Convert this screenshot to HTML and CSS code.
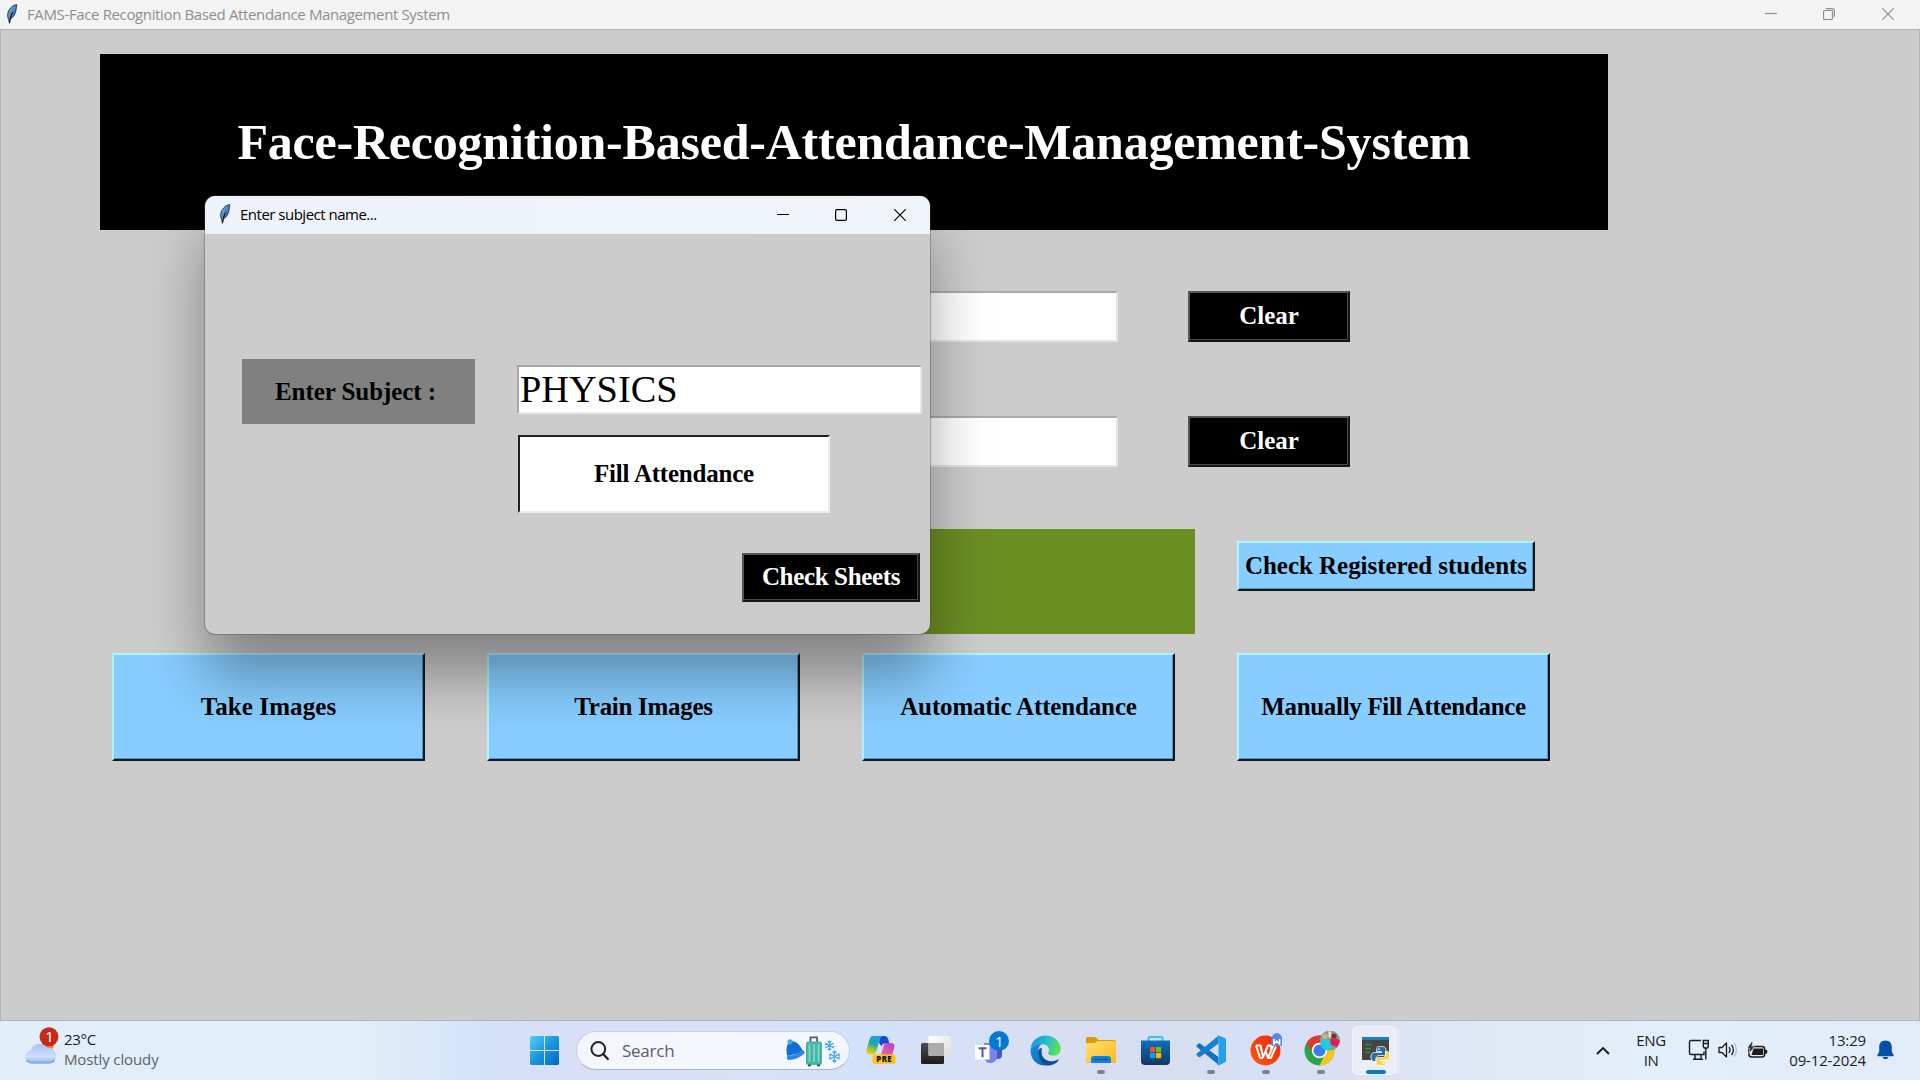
FILE: index.html
```
<!DOCTYPE html>
<html lang="en">
<head>
<meta charset="utf-8">
<title>FAMS-Face Recognition Based Attendance Management System</title>
<link rel="stylesheet" href="styles.css">
</head>
<body>
<svg width="0" height="0" class="defs" aria-hidden="true">
  <defs>
    <linearGradient id="gFeather" x1="0" y1="0" x2="1" y2="1"><stop offset="0" stop-color="#8fb9ea"/><stop offset=".6" stop-color="#3b74bd"/><stop offset="1" stop-color="#1c3555"/></linearGradient>
    <symbol id="feather" viewBox="0 0 12 20">
      <path d="M10.800.6C7.500.8 3 4.300 2 8.600 1.400 11.400 1.500 13.800 2.600 15.300l.8 3.800.7-3.900C6.600 14 9.300 10.500 9.900 6.800 10.300 4.500 10.600 2.600 10.800.6z" fill="url(#gFeather)" stroke="#30343a" stroke-width=".9"/>
      <path d="M6.500 8.300C5 11.500 4 14 3.500 19.300" fill="none" stroke="#15181c" stroke-width="1.100"/>
    </symbol>
  </defs>
</svg>
<div class="desktop">
  <header class="titlebar">
    <svg class="feather" width="12" height="20"><use href="#feather"/></svg>
    <span class="titlebar-text">FAMS-Face Recognition Based Attendance Management System</span>
    <div class="controls">
      <svg width="12" height="12" viewBox="0 0 12 12"><path d="M0 5.500h12"/></svg>
      <svg width="12" height="12" viewBox="0 0 12 12"><rect x=".5" y="2.500" width="9" height="9" rx="1.300"/><path d="M2.800.6h6a2.600 2.600 0 0 1 2.600 2.600v5.600"/></svg>
      <svg width="12" height="12" viewBox="0 0 12 12"><path d="M.3.3l11.400 11.400M11.700.3L.3 11.700"/></svg>
    </div>
  </header>

  <main class="app">
    <h1 class="banner">Face-Recognition-Based-Attendance-Management-System</h1>
    <div class="form-row">
      <div class="entry"></div>
      <button class="btn btn-dark clear">Clear</button>
    </div>
    <div class="form-row form-row-second">
      <div class="entry"></div>
      <button class="btn btn-dark clear">Clear</button>
    </div>
    <div class="status-row">
      <div class="notification"></div>
      <button class="btn btn-sky registered">Check Registered students</button>
    </div>
    <div class="actions">
      <button class="btn btn-sky take">Take Images</button>
      <button class="btn btn-sky train">Train Images</button>
      <button class="btn btn-sky automatic">Automatic Attendance</button>
      <button class="btn btn-sky manual">Manually Fill Attendance</button>
    </div>
  </main>

  <section class="dialog">
    <div class="dialog-bar">
      <svg class="feather" width="12" height="20"><use href="#feather"/></svg>
      <span class="dialog-title">Enter subject name...</span>
      <div class="controls">
        <svg width="12" height="12" viewBox="0 0 12 12"><path d="M0 5.500h12"/></svg>
        <svg width="12" height="12" viewBox="0 0 12 12"><rect x=".6" y=".6" width="10.800" height="10.800" rx="1.500"/></svg>
        <svg width="12" height="12" viewBox="0 0 12 12"><path d="M.3.3l11.400 11.400M11.700.3L.3 11.700"/></svg>
      </div>
    </div>
    <div class="dialog-body">
      <div class="subject-label">Enter Subject :</div>
      <div class="subject-fields">
        <div class="subject-entry">PHYSICS</div>
        <button class="fill">Fill Attendance</button>
      </div>
      <button class="btn btn-dark sheets">Check Sheets</button>
    </div>
  </section>

  <footer class="taskbar">
    <div class="weather">
      <svg width="36" height="40" viewBox="0 0 36 40">
        <defs><linearGradient id="gCloud" x1="0" y1="0" x2="0" y2="1"><stop offset="0" stop-color="#a9c2f4"/><stop offset=".65" stop-color="#cfe0fb"/><stop offset="1" stop-color="#8fb0ee"/></linearGradient></defs>
        <circle cx="24" cy="18" r="6" fill="#f5821f"/>
        <path d="M7.500 36.500a6.700 6.700 0 0 1-.6-13.300A9.300 9.300 0 0 1 23 20.500a7.900 7.900 0 0 1 2.300 16z" fill="url(#gCloud)"/>
        <path d="M2.500 33c1.500 2.300 3.500 2.600 5 2.600h18c2 0 4-1 5-3" fill="none" stroke="#86a8ec" stroke-width="1.800"/>
        <circle cx="25" cy="9.700" r="9.500" fill="#c42b1c"/>
        <text x="25.500" y="15" text-anchor="middle" class="badge-text">1</text>
      </svg>
      <div class="weather-text"><span class="temp">23°C</span><span class="cond">Mostly cloudy</span></div>
    </div>

    <div class="center">
      <svg class="start" width="29" height="29" viewBox="0 0 29 29">
        <defs><linearGradient id="gWin" gradientUnits="userSpaceOnUse" x1="0" y1="0" x2="29" y2="29"><stop offset="0" stop-color="#4fd0fb"/><stop offset=".5" stop-color="#1c95e0"/><stop offset="1" stop-color="#0067c8"/></linearGradient></defs>
        <path fill="url(#gWin)" d="M1.500 0H14v14H0V1.500Q0 0 1.500 0zM15 0h12.500Q29 0 29 1.500V14H15zM0 15h14v14H1.500Q0 29 0 27.500zM15 15h14v12.500q0 1.500-1.500 1.500H15z"/>
      </svg>
      <div class="search">
        <svg width="20" height="20" viewBox="0 0 20 20"><circle cx="8.300" cy="8" r="6.900" fill="none" stroke="#1f1f1f" stroke-width="2"/><path d="M13.200 13l4.600 5" stroke="#1f1f1f" stroke-width="2.300" stroke-linecap="round"/></svg>
        <span class="search-text">Search</span>
        <svg width="58" height="32" viewBox="0 0 58 32">
          <path d="M2.300 21C.5 14 1.500 8.500 6 6.500c5-1 9 3.500 12.300 10.500z" fill="#0f6fd4"/>
          <circle cx="5" cy="6.800" r="2.600" fill="#4ba3f2"/>
          <path d="M4 22.800Q11 22.500 17.300 17.500" fill="none" stroke="#2d86e2" stroke-width="4.400" stroke-linecap="round"/>
          <path d="M25.500 7V2.300h6.500V7" fill="none" stroke="#5d5a66" stroke-width="1.800"/>
          <rect x="21" y="6.500" width="16" height="23.500" rx="2.500" fill="#47b3a6"/>
          <path d="M24.500 9v18M29 9v18M33.500 9v18" stroke="#83d9cc" stroke-width="1.700"/>
          <path d="M23 30.500h3M32 30.500h3" stroke="#30404a" stroke-width="1.500"/>
          <g stroke="#4aa7e6" stroke-width="1.300" fill="none">
            <path d="M44.500 5.500v10M40.200 8l8.600 5M40.200 13l8.600-5M42.800 6.300l1.700 1.400 1.700-1.400M42.800 14.700l1.700-1.400 1.700 1.400M40 10.300l1.700-.9M47.500 12l1.800-.6"/>
            <path d="M49.500 15.500v12M44.300 18.500l10.400 6M44.300 24.500l10.400-6M47.600 16.500l1.900 1.700 1.900-1.700M47.600 26.500l1.900-1.700 1.900 1.700M44 21l2-1M53 23l2-1M44 22.300l2 .8M53 20l2 .8"/>
          </g>
        </svg>
      </div>

      <div class="app-icon">
        <svg width="30" height="30" viewBox="0 0 30 30">
          <defs>
            <linearGradient id="gCo1" x1=".6" y1="0" x2=".3" y2="1"><stop offset="0" stop-color="#12a6ee"/><stop offset=".45" stop-color="#27a3a0"/><stop offset=".7" stop-color="#8cc63f"/><stop offset="1" stop-color="#f6c915"/></linearGradient>
            <linearGradient id="gCo2" x1="1" y1="0" x2="0" y2="1"><stop offset="0" stop-color="#a13fe8"/><stop offset=".5" stop-color="#d957b0"/><stop offset="1" stop-color="#ff7a66"/></linearGradient>
          </defs>
          <path d="M14 1h4.500c2 0 3 1.200 3.600 3l1.200 4.200h-4c-2 0-3 1-3.600 3L13 8z" fill="#1748cf"/>
          <path d="M7.500 1H17c-2 .4-2.900 2-3.500 4l-3 10.500C9.900 17.800 9 19.500 6.500 19.500H4c-3 0-4.300-2-3.500-4.800L3.600 4.300C4.200 2.200 5.300 1 7.500 1z" fill="url(#gCo1)"/>
          <path d="M19.500 8h5c3 0 4.500 1.700 3.700 4.700L26.500 19c-.6 2-1.700 3-3.800 3H12c2.200-.5 3-2 3.600-4l2-7c.4-1.700 1-3 1.900-3z" fill="url(#gCo2)"/>
          <rect x="6.500" y="19.500" width="23" height="9.500" rx="2.500" fill="#ffc414"/>
          <text x="18.200" y="27.200" text-anchor="middle" class="pre">PRE</text>
        </svg>
      </div>
      <div class="app-icon">
        <svg width="32" height="30" viewBox="0 0 32 30">
          <defs><linearGradient id="gTv" x1="0" y1="0" x2="0" y2="1"><stop offset="0" stop-color="#4c4c4c"/><stop offset="1" stop-color="#1c1c1c"/></linearGradient><linearGradient id="gTw" x1="0" y1="0" x2="1" y2="1"><stop offset="0" stop-color="#fff"/><stop offset="1" stop-color="#dcdcdc"/></linearGradient></defs>
          <rect x="1" y="8" width="23" height="21" rx="1.500" fill="url(#gTv)"/>
          <rect x="8.500" y="1" width="22.500" height="20" rx="1.500" fill="url(#gTw)"/>
          <path d="M8.500 8H24v13H10q-1.500 0-1.500-1.500z" fill="#acacac"/>
        </svg>
      </div>
      <div class="app-icon teams">
        <svg width="36" height="36" viewBox="0 0 36 36">
          <rect x="19" y="13" width="10" height="15" rx="4" fill="#4f54c4"/>
          <path d="M11 12h13v14a6 6 0 0 1-6 6c-4 0-6-2-6-5z" fill="#7b83eb"/>
          <rect x="2" y="14" width="14.500" height="14.500" fill="#fff"/>
          <path d="M5.500 17.200h8M9.500 17.200v9" stroke="#4b53bc" stroke-width="2"/>
          <circle cx="26" cy="10" r="10" fill="#0078d4"/>
          <text x="26.200" y="15.600" text-anchor="middle" class="badge-text">1</text>
        </svg>
      </div>
      <div class="app-icon">
        <svg width="31" height="31" viewBox="0 0 31 31">
          <defs>
            <linearGradient id="gE1" x1="0" y1=".2" x2="1" y2=".5"><stop offset="0" stop-color="#168fd8"/><stop offset=".5" stop-color="#27bdd0"/><stop offset="1" stop-color="#5fe04e"/></linearGradient>
            <linearGradient id="gE2" x1="0" y1="0" x2="1" y2="1"><stop offset="0" stop-color="#168fdc"/><stop offset="1" stop-color="#0e62b4"/></linearGradient>
          </defs>
          <path d="M.6 13.500C1.500 6 8 .5 15.600.5 24 .5 30.600 6.500 30.600 14c0 4-3 6.700-7.300 6.700-3.600 0-5.300-1.500-5.300-2.700 0-.9 1.100-1.200 1.100-3.300 0-2.800-2.800-5.400-7-5.400C6.500 9.300 2.500 11 .6 13.500z" fill="url(#gE1)"/>
          <path d="M.5 15.500C.5 11.500 6 9 11.500 9c-2.500 1.500-3.800 5-3.300 9 .7 6.500 5 11 10.500 12.200C8.500 32.500.5 25 .5 15.500z" fill="url(#gE2)"/>
          <path d="M12.200 13.500c-2.700 7 3 13.300 10 12.700 2.700-.2 4.800-1.100 5.900-1.700.6-.2 1 .2.600.8-2.500 3.500-6.300 5.400-10.500 5.200C11.500 29 8 23.500 8.100 17.500c0-3.500 2-5 4.100-4z" fill="#0d4f9d"/>
        </svg>
      </div>
      <div class="app-icon running">
        <svg width="32" height="30" viewBox="0 0 32 30">
          <defs><linearGradient id="gFo" x1="0" y1="0" x2="1" y2="1"><stop offset="0" stop-color="#ffe07a"/><stop offset="1" stop-color="#fbb916"/></linearGradient></defs>
          <path d="M1 3.500Q1 2 2.500 2H9q1.200 0 2 .8L13.500 5H29q2 0 2 2v5H1z" fill="#dd9a07"/>
          <path d="M1 8q5.500.3 9-.2L13 6h16q2 0 2 2v20H1z" fill="url(#gFo)"/>
          <path d="M6 28v-4q0-3 3-3h14q3 0 3 3v4z" fill="#1282d8"/>
          <path d="M9.500 24.500h13" stroke="#075aa2" stroke-width="1.500" stroke-linecap="round"/>
        </svg>
      </div>
      <div class="app-icon">
        <svg width="31" height="31" viewBox="0 0 31 31">
          <defs><linearGradient id="gSt" x1="0" y1="0" x2="0" y2="1"><stop offset="0" stop-color="#0c70bd"/><stop offset="1" stop-color="#163460"/></linearGradient></defs>
          <path d="M8.500 6V3.500Q8.500 2 10 2h11q1.500 0 1.500 1.500V6" fill="none" stroke="#2fc3f0" stroke-width="2"/>
          <path d="M1 5.500h29V26q0 4-4 4H5q-4 0-4-4z" fill="url(#gSt)"/>
          <path d="M10 12h5.200v5.200H10z" fill="#f25022"/><path d="M16 12h5.200v5.200H16z" fill="#7fba00"/><path d="M10 18h5.200v5.200H10z" fill="#00a4ef"/><path d="M16 18h5.200v5.200H16z" fill="#ffb900"/>
        </svg>
      </div>
      <div class="app-icon running">
        <svg width="32" height="31" viewBox="0 0 32 31">
          <path d="M1.500 10.500l2-2q.8-.6 1.600 0L23.500 22v7.800L1.600 11.800q-.5-.7-.1-1.300z" fill="#1173bd"/>
          <path d="M1.500 20l2 2q.8.600 1.600 0L23.500 8.500V.8L1.600 18.700q-.5.700-.1 1.300z" fill="#167fcb"/>
          <path d="M22 1q1-.9 2.400-.3L29.800 3q1.200.6 1.200 2v20.500q0 1.400-1.200 2L24.400 30q-1.400.6-2.400-.4l1.500-1V2.300z" fill="#27a0ec"/>
        </svg>
      </div>
      <div class="app-icon running">
        <svg width="34" height="34" viewBox="0 0 34 34">
          <defs><linearGradient id="gWps" x1="0" y1="1" x2="1" y2="0"><stop offset="0" stop-color="#ff5a0a"/><stop offset="1" stop-color="#ee2415"/></linearGradient></defs>
          <circle cx="16.500" cy="17.500" r="15" fill="url(#gWps)"/>
          <path d="M7 12.500h4.500l2.600 11.500L19 12.500h3.500l-.8 4M14 25l-3-.2L7 12.500M19 25l5.300-12.300M16.500 18l2.500 7h2.800L27 13.500" fill="none" stroke="#fff" stroke-width="2" stroke-linejoin="round"/>
          <path d="M23 3.500Q25 0 28 0t5 4.500V13H22.500V5z" fill="#5a86e8"/>
          <path d="M25 6v4.800l2.800-2.600 2.800 2.600V6" fill="none" stroke="#fff" stroke-width="1.600"/>
        </svg>
      </div>
      <div class="app-icon running">
        <svg width="38" height="38" viewBox="0 0 38 38">
          <circle cx="17.500" cy="19.500" r="15" fill="#2fa24c"/>
          <path d="M4.500 12A15 15 0 0 1 30.500 12L17.500 12.500a7 7 0 0 0-6.100 10.500z" fill="#de3a2d"/>
          <path d="M30.500 12A15 15 0 0 1 17.500 34.500l6-11.500A7 7 0 0 0 17.500 12.500z" fill="#fcc51b"/>
          <circle cx="17.500" cy="19.500" r="7.700" fill="#fff"/><circle cx="17.500" cy="19.500" r="6" fill="#3b7ded"/>
          <g transform="translate(0 -.5)">
            <circle cx="28" cy="10" r="10" fill="#8c9a85"/>
            <path d="M18.500 9l4.500-1 5 2 2.500 8.500q-3.500 2.500-8 0.500T18.500 12z" fill="#21ccd6"/>
            <path d="M28 8.500q4-2 9.500 1 .5 3-2.500 7l-6-2z" fill="#e31b62"/>
            <circle cx="23" cy="6" r="2.800" fill="#d9a58e"/><circle cx="32" cy="5.500" r="2.600" fill="#6e3835"/><path d="M26.500 1h2.500v6h-2.500z" fill="#e8e4cf"/>
          </g>
        </svg>
      </div>
      <div class="app-icon active">
        <svg width="30" height="30" viewBox="0 0 30 30">
          <path d="M1 1h27v23H1z" fill="#444"/><path d="M1 1h27v3H1z" fill="#1383cc"/>
          <path d="M4 8.500h7M4 12.500h6M4 16.500h5" stroke="#3e8b45" stroke-width="1.300"/>
          <g stroke="#fff" stroke-width=".8">
            <path d="M19.500 10.500c-4 0-4 1.500-4 3v2h5v1h-7c-2.500 0-3.500 2-3.500 4.500s1 4.500 3 4.500h2v-3c0-2 1.500-3 3.500-3h4c1.500 0 2.500-1 2.500-2.500v-3.500c0-2-1.500-3-5.500-3z" fill="#2e6da4"/>
            <path d="M21 29.500c4 0 4-1.500 4-3V25h-5v-1h5.500c2.500 0 3.500-1.500 3.500-4s-1-4.500-3-4.500h-1.500v3c0 2-1.500 3-3 3h-4c-1.500 0-2.500 1-2.500 2.500V27c0 1.500 2 2.500 6 2.500z" fill="#fbd24a"/>
          </g>
          <circle cx="17.800" cy="13.200" r=".9" fill="#fff"/><circle cx="22.500" cy="26.900" r=".9" fill="#fff"/>
        </svg>
      </div>
    </div>

    <div class="tray">
      <svg class="chev" width="14" height="9" viewBox="0 0 14 9"><path d="M1 8l6-6 6 6" fill="none" stroke="#1b1b1b" stroke-width="1.900"/></svg>
      <div class="lang"><span>ENG</span><span>IN</span></div>
      <svg class="net" width="22" height="22" viewBox="0 0 22 22"><g fill="none" stroke="#1b1b1b" stroke-width="1.400"><path d="M13 1.500H3Q1.500 1.500 1.500 3v11Q1.500 15.500 3 15.500h13v-3M7 15.500v4.500M13 15.500v4.500M5 20.300h10"/><path d="M15.300 1.500h5v6l-1 1.500h-3l-1-1.500zM15.300 4.500h5M17.800 9v11.500"/></g></svg>
      <svg class="vol" width="20" height="18" viewBox="0 0 20 18"><g fill="none" stroke="#1b1b1b" stroke-width="1.300" stroke-linejoin="round"><path d="M1 6.500h3L8.500 2v14L4 11.500H1z"/><path d="M11 6q2 3 0 6M13.500 3.800q3.800 5.200 0 10.400"/><path d="M16 1.800q5 7.200 0 14.400" stroke="#b6bec6"/></g></svg>
      <svg class="bat" width="21" height="17" viewBox="0 0 21 17"><rect x="2" y="4.500" width="15.500" height="10.500" rx="2.500" fill="none" stroke="#1b1b1b" stroke-width="1.600"/><path d="M4.500 13L6.500 6.500H16V13zM18 7.500q2.500 0 2.500 2.200T18 12z" fill="#1b1b1b"/><path d="M4.500 0L.3 6h2.800l-1 5.500L7.500 4.700H4.600L5.800 0z" fill="#1b1b1b" stroke="#e3edf8" stroke-width=".6"/></svg>
      <div class="clock"><span>13:29</span><span>09-12-2024</span></div>
      <svg class="bell" width="17" height="20" viewBox="0 0 17 20"><path d="M8.500.5c4 0 6.300 2.800 6.300 6.500v4.500l2 4q0 .7-.8.700H1q-.8 0-.8-.7l2-4V7C2.200 3.300 4.500.5 8.500.5zM5.500 17h6q-.8 2.300-3 2.300T5.500 17z" fill="#0450a8"/></svg>
    </div>
  </footer>
</div>
</body>
</html>
```
FILE: styles.css
```
* { box-sizing: border-box; }
body { margin: 0; width: 1920px; height: 1080px; overflow: hidden; }
.defs { position: absolute; }
button { margin: 0; padding: 0; border-radius: 0; font: inherit; }

.desktop {
  position: relative;
  display: flex;
  flex-direction: column;
  width: 1920px;
  height: 1080px;
  background: #ccc;
  font-family: "Liberation Serif", serif;
}

/* main window */
.titlebar {
  display: flex;
  align-items: center;
  height: 29px;
  padding: 0 26px 1px 6px;
  background: #f3f3f3;
  color: #8f8f8f;
  font-family: "Open Sans", sans-serif;
  font-size: 15px;
}
.titlebar-text { margin-left: 9px; letter-spacing: -0.37px; white-space: nowrap; }
.controls { display: flex; gap: 46.500px; margin-left: auto; }
.controls svg { fill: none; stroke: currentColor; stroke-width: 1.200; }
.controls svg:nth-child(2) { margin: 0 1px 0 -1px; }

.app {
  height: 992px;
  padding: 24px 0 0 99px;
  border: 1px solid #b4b6b6;
  border-bottom-color: #b0b4bc;
  background: #ccc;
  font-size: 25px;
  font-weight: bold;
}
.banner {
  display: flex;
  align-items: center;
  justify-content: center;
  width: 1508px;
  height: 176px;
  margin: 0;
  background: #000;
  color: #fff;
  font-size: 50px;
  letter-spacing: -0.22px;
}
.form-row { display: flex; gap: 70px; height: 51px; margin: 61px 0 0 573px; }
.form-row-second { margin-top: 74px; }
.entry {
  width: 445px;
  background: #fff;
  border: 2px solid;
  border-color: #aaa #e4e4e4 #e4e4e4 #aaa;
}
.btn { display: flex; align-items: center; justify-content: center; border: 2px solid; font-weight: bold; }
.btn-dark { background: #000; color: #fff; border-color: #555 #161616 #161616 #555; box-shadow: inset -1px -1px #484848; }
.btn-sky { background: #87cdff; color: #000; border-color: #aef3ff #10181e #10181e #aef3ff; box-shadow: inset -1px -1px #5b91ba; }
.clear { width: 162px; height: 51px; padding-bottom: 1px; }
.status-row { display: flex; gap: 42px; height: 105px; margin: 62px 0 0 330px; }
.notification { width: 765px; background: #6b8e23; }
.registered { width: 298px; height: 50px; margin-top: 12px; letter-spacing: -0.03px; }
.actions { display: grid; grid-template-columns: repeat(4, 313px); column-gap: 62px; height: 108px; margin: 19px 0 0 12px; }
.actions .btn { padding-bottom: 1px; }
.take { letter-spacing: 0.1px; }
.train { letter-spacing: -0.3px; }
.automatic { letter-spacing: -0.15px; }
.manual { letter-spacing: -0.32px; }

/* subject dialog, floating above the main window */
.dialog {
  position: absolute;
  left: 205px;
  top: 196px;
  width: 725px;
  height: 438px;
  display: flex;
  flex-direction: column;
  overflow: hidden;
  border-radius: 10px;
  background: #ccc;
  box-shadow: 0 0 0 1px rgba(70, 70, 70, .35), 0 40px 60px rgba(0, 0, 0, .36);
}
.dialog-bar {
  display: flex;
  align-items: center;
  height: 38px;
  padding: 0 24px 0 14px;
  background: linear-gradient(90deg, #eef3fb, #eef4f8);
  font-family: "Open Sans", sans-serif;
  font-size: 15px;
  color: #000;
}
.dialog-title { margin-left: 9px; padding-bottom: 2px; letter-spacing: -0.5px; }
.dialog-bar .feather { margin-top: -2px; }
.dialog-body {
  flex: 1;
  display: grid;
  grid-template-columns: 233px 405px;
  grid-template-rows: 187px 49px;
  column-gap: 42px;
  padding: 125px 0 0 37px;
  row-gap: 7px;
  font-size: 25px;
  font-weight: bold;
}
.subject-label {
  display: flex;
  align-items: center;
  height: 65px;
  padding-left: 33px;
  background: #808080;
  letter-spacing: -0.07px;
}
.subject-fields { display: flex; flex-direction: column; padding-top: 6px; }
.subject-entry {
  display: flex;
  align-items: center;
  height: 49px;
  padding-left: 1px;
  border: 2px solid;
  border-color: #a6a6a6 #e6e6e6 #e6e6e6 #a6a6a6;
  background: #fff;
  font-size: 38.300px;
  font-weight: normal;
  padding-bottom: 1px;
}
.fill {
  width: 312px;
  height: 78px;
  margin: 21px 0 0 1px;
  border: 2px solid;
  border-color: #222 #ececec #ececec #222;
  background: #fff;
  color: #000;
  font-weight: bold;
  letter-spacing: -0.22px;
}
.sheets { grid-column: 2; width: 178px; height: 49px; margin-left: 225px; padding-bottom: 2px; letter-spacing: -0.35px; }

/* taskbar */
.taskbar {
  display: flex;
  height: 59px;
  padding: 0 26px 0 24px;
  background: linear-gradient(90deg, #e1edf8 0, #e3eff8 18%, #d3e3fa 25%, #d8dff7 28.500%, #d9e1f7 38%, #d3e2fa 45%, #d9def2 55%, #d7def0 62%, #d5e0f8 66%, #dadff2 70%, #e0e9f6 78%, #e2eef9 86%, #e1ecf8 100%);
  font-family: "Open Sans", sans-serif;
  font-size: 15px;
  color: #1c1c1c;
}
.weather { display: flex; width: 506px; padding-top: 6px; }
.weather-text { display: flex; flex-direction: column; margin: 2px 0 0 4px; line-height: 20px; letter-spacing: -0.3px; }
.cond { color: #5d6268; letter-spacing: -0.12px; }
.badge-text { font-family: "Open Sans", sans-serif; font-size: 15px; fill: #fff; }
.pre { font-family: "Open Sans", sans-serif; font-size: 7.800px; font-weight: 800; letter-spacing: .4px; fill: #111; }
.center { display: flex; align-items: flex-start; }
.start { margin-top: 15px; }
.search {
  display: flex;
  align-items: center;
  width: 274px;
  height: 39px;
  margin: 10px 3px 0 17px;
  padding: 0 6px 0 13px;
  border: 1px solid #c3cfe4;
  border-bottom-color: #a9b4c8;
  border-radius: 20px;
  background: #f3f6fd;
}
.search-text { flex: 1; margin-left: 12px; font-size: 17px; letter-spacing: -0.25px; color: #5c5f66; }
.app-icon { position: relative; display: flex; align-items: center; justify-content: center; width: 55px; height: 58px; }
.app-icon::after { content: ""; position: absolute; left: 23.500px; bottom: 5px; width: 8px; height: 4px; border-radius: 2px; background: transparent; }
.teams { padding-bottom: 3px; }
.running::after { background: #7d828c; }
.active { width: 44px; height: 49px; margin: 5px 0 0 4px; border: 1px solid #f5f6fa; border-radius: 6px; background: #eaedf7; box-shadow: 5px 0 0 -1px #e6e9f4; padding-left: 3px; }
.active::after { left: 13px; bottom: 0; width: 20px; background: #0a76d2; }
.tray { display: flex; align-items: center; margin-left: auto; padding-bottom: 1px; }
.lang, .clock { display: flex; flex-direction: column; line-height: 20px; }
.lang { align-items: center; width: 30px; margin-left: 26px; letter-spacing: -0.4px; }
.net { margin-left: 22px; }
.vol { margin-left: 8px; }
.bat { margin-left: 9px; }
.clock { align-items: flex-end; width: 80px; margin-left: 18px; letter-spacing: -0.15px; }
.bell { margin-left: 11px; }
```
